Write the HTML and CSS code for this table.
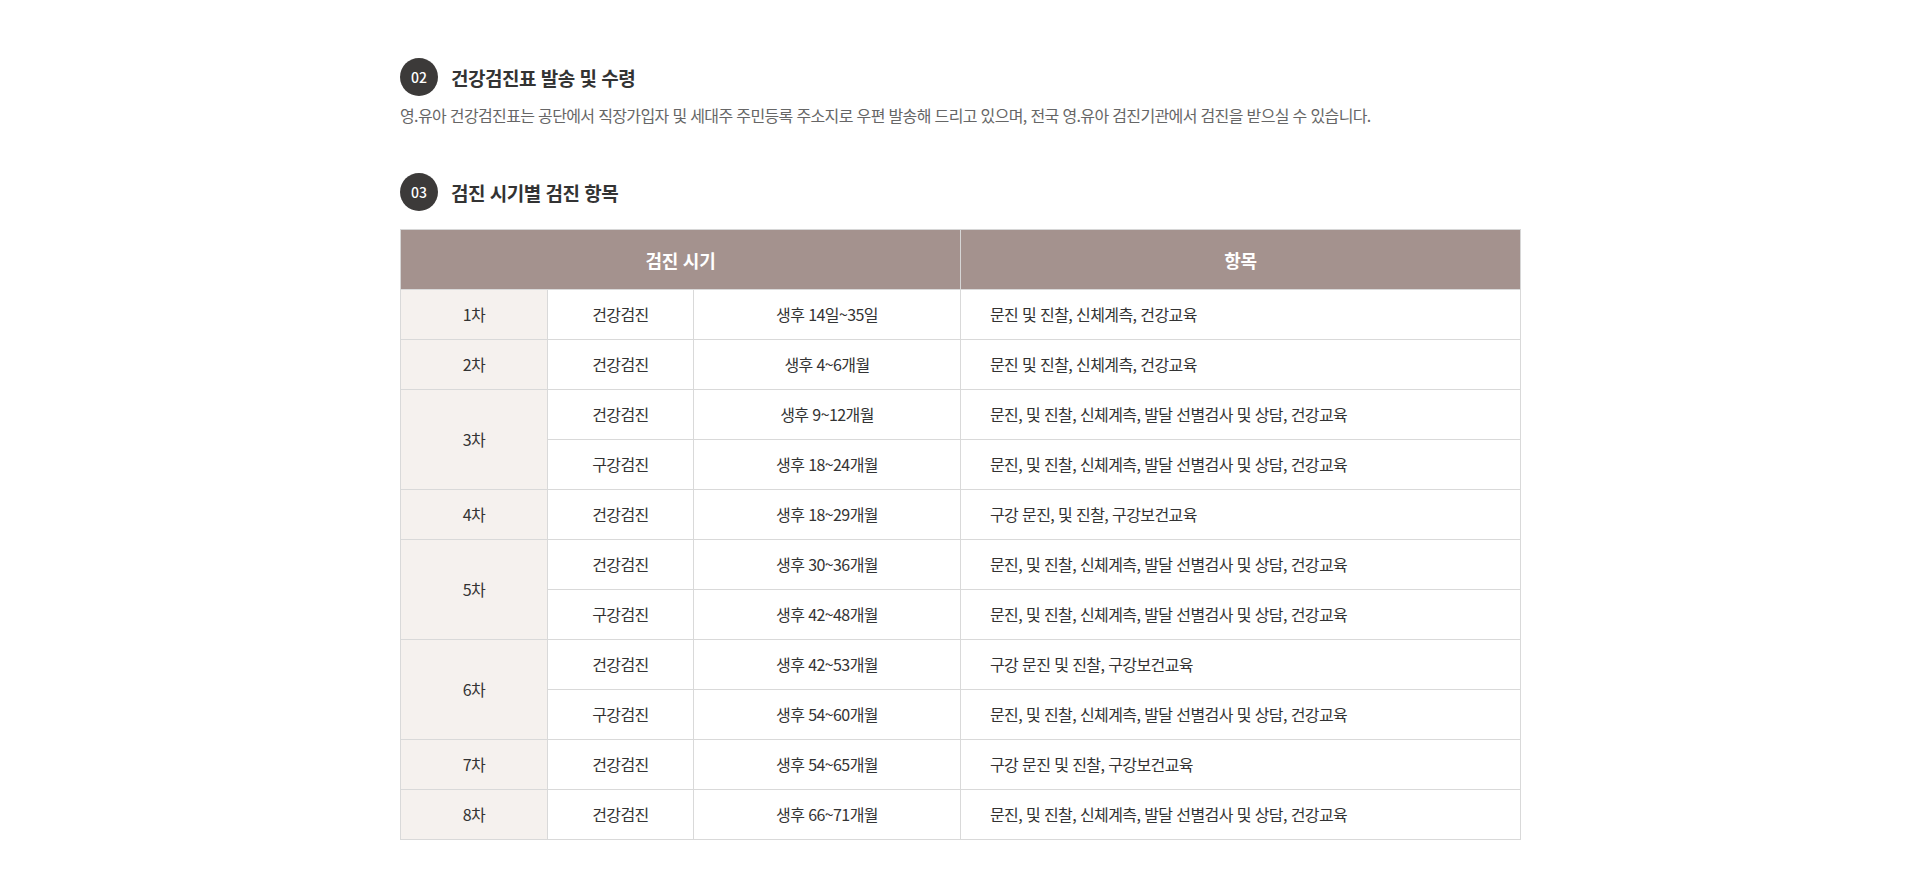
FILE: index.html
```html
<!DOCTYPE html>
<html lang="ko">
<head>
  <meta charset="UTF-8">
  <title>영유아 건강검진 안내</title>
  <link rel="stylesheet" href="styles.css">
</head>
<body>

<div class="content">

  <div class="section">
    <h3 class="tit"><span class="num">02</span>건강검진표 발송 및 수령</h3>
    <p class="desc">영.유아 건강검진표는 공단에서 직장가입자 및 세대주 주민등록 주소지로 우편 발송해 드리고 있으며, 전국 영.유아 검진기관에서 검진을 받으실 수 있습니다.</p>
  </div>

  <div class="section">
    <h3 class="tit"><span class="num">03</span>검진 시기별 검진 항목</h3>

    <table class="tbl">
      <colgroup>
        <col class="c1">
        <col class="c2">
        <col class="c3">
        <col class="c4">
      </colgroup>
      <thead>
        <tr>
          <th colspan="3">검진 시기</th>
          <th>항목</th>
        </tr>
      </thead>
      <tbody>
        <tr>
          <td class="step">1차</td>
          <td>건강검진</td>
          <td>생후 14일~35일</td>
          <td class="left">문진 및 진찰, 신체계측, 건강교육</td>
        </tr>
        <tr>
          <td class="step">2차</td>
          <td>건강검진</td>
          <td>생후 4~6개월</td>
          <td class="left">문진 및 진찰, 신체계측, 건강교육</td>
        </tr>
        <tr>
          <td class="step" rowspan="2">3차</td>
          <td>건강검진</td>
          <td>생후 9~12개월</td>
          <td class="left">문진, 및 진찰, 신체계측, 발달 선별검사 및 상담, 건강교육</td>
        </tr>
        <tr>
          <td>구강검진</td>
          <td>생후 18~24개월</td>
          <td class="left">문진, 및 진찰, 신체계측, 발달 선별검사 및 상담, 건강교육</td>
        </tr>
        <tr>
          <td class="step">4차</td>
          <td>건강검진</td>
          <td>생후 18~29개월</td>
          <td class="left">구강 문진, 및 진찰, 구강보건교육</td>
        </tr>
        <tr>
          <td class="step" rowspan="2">5차</td>
          <td>건강검진</td>
          <td>생후 30~36개월</td>
          <td class="left">문진, 및 진찰, 신체계측, 발달 선별검사 및 상담, 건강교육</td>
        </tr>
        <tr>
          <td>구강검진</td>
          <td>생후 42~48개월</td>
          <td class="left">문진, 및 진찰, 신체계측, 발달 선별검사 및 상담, 건강교육</td>
        </tr>
        <tr>
          <td class="step" rowspan="2">6차</td>
          <td>건강검진</td>
          <td>생후 42~53개월</td>
          <td class="left">구강 문진 및 진찰, 구강보건교육</td>
        </tr>
        <tr>
          <td>구강검진</td>
          <td>생후 54~60개월</td>
          <td class="left">문진, 및 진찰, 신체계측, 발달 선별검사 및 상담, 건강교육</td>
        </tr>
        <tr>
          <td class="step">7차</td>
          <td>건강검진</td>
          <td>생후 54~65개월</td>
          <td class="left">구강 문진 및 진찰, 구강보건교육</td>
        </tr>
        <tr>
          <td class="step">8차</td>
          <td>건강검진</td>
          <td>생후 66~71개월</td>
          <td class="left">문진, 및 진찰, 신체계측, 발달 선별검사 및 상담, 건강교육</td>
        </tr>
      </tbody>
    </table>
  </div>

</div>

</body>
</html>
```

FILE: styles.css
```css
* {
  box-sizing: border-box;
}
body {
  margin: 0;
  background: #fff;
  color: #333;
  font-family: "Noto Sans CJK KR", "Noto Sans", sans-serif;
}
.content {
  width: 1120px;
  margin: 0 auto;
  padding: 58px 0 55px;
}
.section + .section {
  margin-top: 46px;
}
.tit {
  display: flex;
  align-items: center;
  gap: 13px;
  margin: 0;
  height: 38px;
  font-size: 19px;
  font-weight: bold;
  letter-spacing: -0.5px;
  color: #333;
}
.num {
  display: flex;
  align-items: center;
  justify-content: center;
  width: 38px;
  height: 38px;
  border-radius: 50%;
  background: #3c3a39;
  color: #fff;
  font-size: 14px;
  font-weight: 500;
  letter-spacing: 0;
}
.desc {
  margin: 7px 0 0;
  font-size: 16px;
  line-height: 24px;
  letter-spacing: -0.65px;
  color: #666;
}

.tbl {
  width: 100%;
  margin-top: 18px;
  border-collapse: collapse;
  table-layout: fixed;
  font-size: 16px;
  letter-spacing: -0.6px;
  color: #333;
}
.tbl .c1 { width: 147px; }
.tbl .c2 { width: 146px; }
.tbl .c3 { width: 267px; }
.tbl .c4 { width: 560px; }
.tbl th {
  height: 60px;
  padding: 0;
  background: #a4928e;
  color: #fff;
  font-size: 18px;
  font-weight: bold;
  letter-spacing: -0.3px;
  border: 1px solid #d6d6d6;
  border-bottom: 0;
}
.tbl td {
  height: 50px;
  padding: 0 0 2px;
  text-align: center;
  border: 1px solid #d9d9d9;
}
.tbl td.step {
  background: #f5f1ee;
}
.tbl td.left {
  text-align: left;
  padding-left: 29px;
}
```
